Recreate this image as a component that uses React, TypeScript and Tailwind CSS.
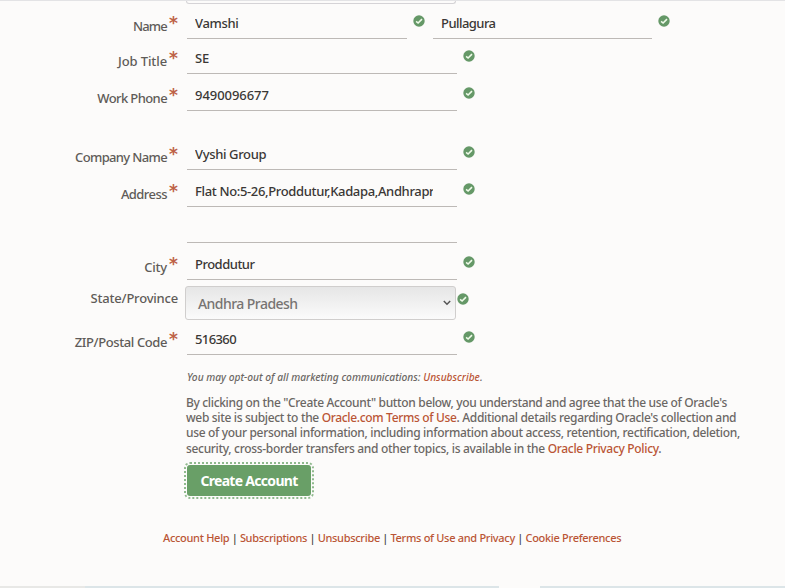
import type { ReactNode } from "react";

function Check({ className = "" }: { className?: string }) {
  return (
    <svg viewBox="0 0 12 12" className={`h-3 w-3 shrink-0 ${className}`}>
      <circle cx="6" cy="6" r="5.7" fill="#659867" />
      <path d="M3.1 6.3 L5.1 8 L9 4.1" fill="none" stroke="#effbe9" strokeWidth="1.6" />
    </svg>
  );
}

function Label({ text, spacing = "", required = true }: { text: string; spacing?: string; required?: boolean }) {
  return (
    <label className="flex h-[25px] w-[178px] shrink-0 justify-end text-[13px] leading-6 font-medium whitespace-nowrap text-[#5f5b58]">
      <span className={spacing}>{text}</span>
      {required && (
        <span className="mt-[-3px] ml-[2px] w-[9px] font-['DejaVu_Sans'] text-[17px] leading-[24px] font-bold text-[#be6247]">*</span>
      )}
    </label>
  );
}

function Field({ value, width, spacing = "" }: { value: string; width: string; spacing?: string }) {
  return (
    <div className={`h-[33px] shrink-0 border-b border-[#bdb9b6] pr-6 pl-2 ${width}`}>
      <div className={`h-[32px] overflow-hidden text-[13px] leading-[34px] font-medium whitespace-nowrap text-[#3a3735] ${spacing}`}>
        {value}
      </div>
    </div>
  );
}

function Row({ height, label, children }: { height: string; label?: ReactNode; children: ReactNode }) {
  return (
    <div className={`flex shrink-0 items-end ${height}`}>
      {label ?? <div className="w-[178px]" />}
      <div className="ml-[9px] flex items-end">{children}</div>
    </div>
  );
}

const link = "text-[#ba5535]";

export default function App() {
  return (
    <main className="flex h-[588px] w-[785px] flex-col overflow-hidden bg-[#fcfbfa] font-['Noto_Sans',sans-serif]">
      <div className="h-1 border-t border-[#e3e3e5]">
        <div className="ml-[186px] h-[3px] w-[270px] rounded-b border-x border-b border-[#d5d3d6]" />
      </div>
      <Row height="h-[35px]" label={<Label text="Name" spacing="tracking-[-0.8px]" />}>
        <Field value="Vamshi" width="w-[220px]" spacing="tracking-[-0.35px]" />
        <Check className="mr-[8px] mb-3 ml-[6px]" />
        <Field value="Pullagura" width="w-[219px]" spacing="tracking-[-0.55px]" />
        <Check className="mb-3 ml-[6px]" />
      </Row>
      <Row height="h-[35px]" label={<Label text="Job Title" spacing="tracking-[-0.1px]" />}>
        <Field value="SE" width="w-[270px]" spacing="tracking-[-0.1px]" />
        <Check className="mb-3 ml-[6px]" />
      </Row>
      <Row height="h-[37px]" label={<Label text="Work Phone" spacing="tracking-[-0.6px]" />}>
        <Field value="9490096677" width="w-[270px]" spacing="tracking-[-0.05px]" />
        <Check className="mb-3 ml-[6px]" />
      </Row>
      <Row height="h-[59px]" label={<Label text="Company Name" spacing="tracking-[-0.65px]" />}>
        <Field value="Vyshi Group" width="w-[270px]" spacing="tracking-[-0.35px]" />
        <Check className="mb-3 ml-[6px]" />
      </Row>
      <Row height="h-[37px]" label={<Label text="Address" spacing="tracking-[-0.55px]" />}>
        <Field value="Flat No:5-26,Proddutur,Kadapa,Andhrapradesh" width="w-[270px]" spacing="tracking-[-0.35px]" />
        <Check className="mb-3 ml-[6px]" />
      </Row>
      <Row height="h-[36px]">
        <Field value="" width="w-[270px]" />
      </Row>
      <Row height="h-[37px]" label={<Label text="City" spacing="tracking-[-0.2px]" />}>
        <Field value="Proddutur" width="w-[270px]" spacing="tracking-[-0.5px]" />
        <Check className="mb-3 ml-[6px]" />
      </Row>
      <div className="flex h-[40px] shrink-0 items-start pt-[6px]">
        <Label text="State/Province" spacing="tracking-[-0.2px]" required={false} />
        <div className="ml-[7px] flex h-[34px] w-[271px] items-center justify-between rounded-[3px] border border-[#d0cecd] bg-linear-to-b from-[#e6e6e6] to-[#fbfbfb] pr-[4px] pl-3 text-sm font-medium tracking-[-0.55px] text-[#777472]">
          <span className="pt-px">Andhra Pradesh</span>
          <svg viewBox="0 0 8 6" className="h-[6px] w-2">
            <path d="M0.8 1 L4 4.2 L7.2 1" fill="none" stroke="#555" strokeWidth="1.5" />
          </svg>
        </div>
        <Check className="mt-[7px] ml-[1px]" />
      </div>
      <Row height="h-[35px]" label={<Label text="ZIP/Postal Code" spacing="tracking-[-0.4px]" />}>
        <Field value="516360" width="w-[270px]" spacing="tracking-[-0.6px]" />
        <Check className="mb-3 ml-[6px]" />
      </Row>
      <section className="ml-[186px] pt-[14px] text-[#6b6764]">
        <p className="ml-px h-[16px] text-[10.2px] leading-4 font-medium whitespace-nowrap italic">
          You may opt-out of all marketing communications: <a className={link}>Unsubscribe</a>.
        </p>
        <div className="mt-[10px] text-xs leading-[15.2px] font-medium whitespace-nowrap">
          <p className="tracking-[-0.34px]">By clicking on the "Create Account" button below, you understand and agree that the use of Oracle's</p>
          <p className="tracking-[-0.335px]">web site is subject to the <a className={link}>Oracle.com Terms of Use</a>. Additional details regarding Oracle's collection and</p>
          <p className="tracking-[-0.333px]">use of your personal information, including information about access, retention, rectification, deletion,</p>
          <p className="tracking-[-0.32px]">security, cross-border transfers and other topics, is available in the <a className={link}>Oracle Privacy Policy</a>.</p>
        </div>
      </section>
      <button className="mt-[9px] ml-[187px] h-[31px] w-[124px] shrink-0 rounded-[3px] bg-[#699f67] pt-px text-[14px] font-bold tracking-[-0.7px] text-white outline-2 outline-offset-1 outline-dotted outline-[#8fb98d]">
        Create Account
      </button>
      <nav className="mt-[34px] ml-[163px] flex h-4 gap-[2.4px] text-[11px] leading-4 font-medium tracking-[-0.3px] whitespace-nowrap text-[#3d3a38]">
        <a className={link}>Account Help</a>
        <span>|</span>
        <a className={link}>Subscriptions</a>
        <span>|</span>
        <a className={link}>Unsubscribe</a>
        <span>|</span>
        <a className={link}>Terms of Use and Privacy</a>
        <span>|</span>
        <a className={link}>Cookie Preferences</a>
      </nav>
      <footer className="mt-auto flex h-[2px]">
        <div className="w-[85px] bg-[#e8e8e6]" />
        <div className="w-[414px] bg-[#dce5e8]" />
        <div className="w-[41px]" />
        <div className="flex-1 bg-[#dce5e8]" />
      </footer>
    </main>
  );
}
